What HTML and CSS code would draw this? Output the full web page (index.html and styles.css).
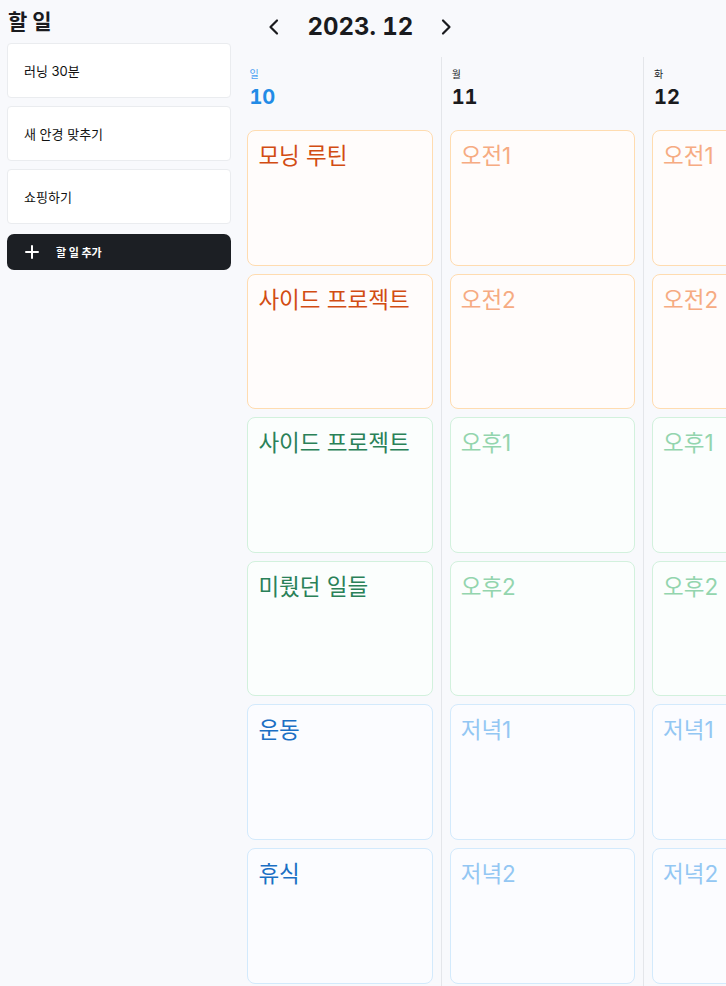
FILE: index.html
```html
<!DOCTYPE html>
<html lang="ko">
<head>
<meta charset="utf-8">
<title>할 일</title>
<link rel="stylesheet" href="styles.css">
</head>
<body>
<div class="app">
  <aside class="sidebar">
    <h1 class="sidebar-title">할 일</h1>
    <div class="todo-list">
      <div class="todo-card">러닝 30분</div>
      <div class="todo-card">새 안경 맞추기</div>
      <div class="todo-card">쇼핑하기</div>
    </div>
    <button class="add-btn" type="button">
      <svg class="add-icon" width="14" height="14" viewBox="0 0 14 14"><path d="M7 1V13M1 7H13" stroke="#fff" stroke-width="2" stroke-linecap="round" fill="none"/></svg>
      <span>할 일 추가</span>
    </button>
  </aside>
  <main class="main">
    <header class="month-nav">
      <svg class="chev" width="20" height="20" viewBox="0 0 20 20"><path d="M13 3.5L6.5 10L13 16.5" stroke="#1a1b1e" stroke-width="2.2" fill="none" stroke-linecap="round" stroke-linejoin="round"/></svg>
      <span class="month-title">2023. 12</span>
      <svg class="chev" width="20" height="20" viewBox="0 0 20 20"><path d="M7 3.5L13.5 10L7 16.5" stroke="#1a1b1e" stroke-width="2.2" fill="none" stroke-linecap="round" stroke-linejoin="round"/></svg>
    </header>
    <div class="columns">
      <section class="day">
        <div class="day-head">
          <div class="day-label sun">일</div>
          <div class="day-num sun">10</div>
        </div>
        <div class="slots">
          <div class="slot morning filled">모닝 루틴</div>
          <div class="slot morning filled">사이드 프로젝트</div>
          <div class="slot afternoon filled">사이드 프로젝트</div>
          <div class="slot afternoon filled">미뤘던 일들</div>
          <div class="slot evening filled">운동</div>
          <div class="slot evening filled">휴식</div>
        </div>
      </section>
      <section class="day">
        <div class="day-head">
          <div class="day-label">월</div>
          <div class="day-num">11</div>
        </div>
        <div class="slots">
          <div class="slot morning">오전1</div>
          <div class="slot morning">오전2</div>
          <div class="slot afternoon">오후1</div>
          <div class="slot afternoon">오후2</div>
          <div class="slot evening">저녁1</div>
          <div class="slot evening">저녁2</div>
        </div>
      </section>
      <section class="day">
        <div class="day-head">
          <div class="day-label">화</div>
          <div class="day-num">12</div>
        </div>
        <div class="slots">
          <div class="slot morning">오전1</div>
          <div class="slot morning">오전2</div>
          <div class="slot afternoon">오후1</div>
          <div class="slot afternoon">오후2</div>
          <div class="slot evening">저녁1</div>
          <div class="slot evening">저녁2</div>
        </div>
      </section>
    </div>
  </main>
</div>
</body>
</html>
```

FILE: styles.css
```css
* { box-sizing: border-box; }

html, body {
  margin: 0;
  padding: 0;
  height: 100%;
  overflow: hidden;
}

body {
  background: #f8f9fc;
  font-family: Inter, "Noto Sans CJK KR", sans-serif;
  color: #1a1b1e;
}

.app {
  display: flex;
  align-items: flex-start;
  gap: 8.4px;
  padding-left: 7px;
  height: 100vh;
}

.sidebar {
  width: 224px;
  flex-shrink: 0;
  padding-top: 7px;
}

.sidebar-title {
  margin: 0 0 6px 1px;
  font-size: 21px;
  line-height: 30px;
  font-weight: 700;
  color: #1a1b1e;
}

.todo-list {
  display: flex;
  flex-direction: column;
  gap: 8px;
}

.todo-card {
  height: 55px;
  display: flex;
  align-items: center;
  padding: 0 16px;
  background: #ffffff;
  border: 1px solid #eaecef;
  border-radius: 4px;
  font-size: 13px;
  color: #111;
}

.add-btn {
  margin-top: 10px;
  width: 100%;
  height: 36px;
  display: flex;
  align-items: center;
  gap: 17px;
  padding: 0 0 0 18px;
  border: none;
  border-radius: 7px;
  background: #1c1f24;
  color: #fff;
  font-family: Inter, "Noto Sans CJK KR", sans-serif;
  font-size: 11px;
  font-weight: 700;
}

.add-icon { flex-shrink: 0; }

.main {
  flex: 1;
  min-width: 0;
  height: 100vh;
  display: flex;
  flex-direction: column;
}

.month-nav {
  height: 57px;
  flex-shrink: 0;
  display: flex;
  align-items: center;
  gap: 23px;
  padding-left: 25px;
  padding-bottom: 4px;
}

.chev { flex-shrink: 0; }

.month-title {
  font-size: 24px;
  font-weight: 700;
  line-height: 30px;
  color: #1a1b1e;
  letter-spacing: 0;
  font-variant-numeric: tabular-nums;
}

.columns {
  flex: 1;
  display: flex;
  align-items: stretch;
}

.day {
  width: 202.3px;
  flex-shrink: 0;
  border-right: 1px solid #e4e6ea;
  padding: 10px 8px 0 8px;
}

.day-head {
  padding-left: 2px;
  margin-bottom: 21px;
}

.day-label {
  font-size: 10px;
  line-height: 14px;
  color: #212529;
  margin-bottom: 4px;
}

.day-num {
  font-size: 20px;
  line-height: 24px;
  font-weight: 700;
  color: #1a1b1e;
  font-variant-numeric: tabular-nums;
}

.day-label.sun { color: #4a9ff2; }
.day-num.sun { color: #228be6; }

.slots {
  display: flex;
  flex-direction: column;
  gap: 8px;
}

.slot {
  height: 135.6px;
  border: 1px solid;
  border-radius: 8px;
  padding: 10px 10px;
  font-size: 22.5px;
  line-height: 30px;
}

.slot.morning {
  border-color: #ffdcb0;
  background: #fffcfb;
  color: #f6ab82;
}

.slot.afternoon {
  border-color: #d2f1dd;
  background: #fbfefd;
  color: #93d5ae;
}

.slot.evening {
  border-color: #d3eafc;
  background: #fbfcff;
  color: #93c7f3;
}

.slot.morning.filled { color: #d24c12; }
.slot.afternoon.filled { color: #2a8158; }
.slot.evening.filled { color: #1a6fc4; }
```
